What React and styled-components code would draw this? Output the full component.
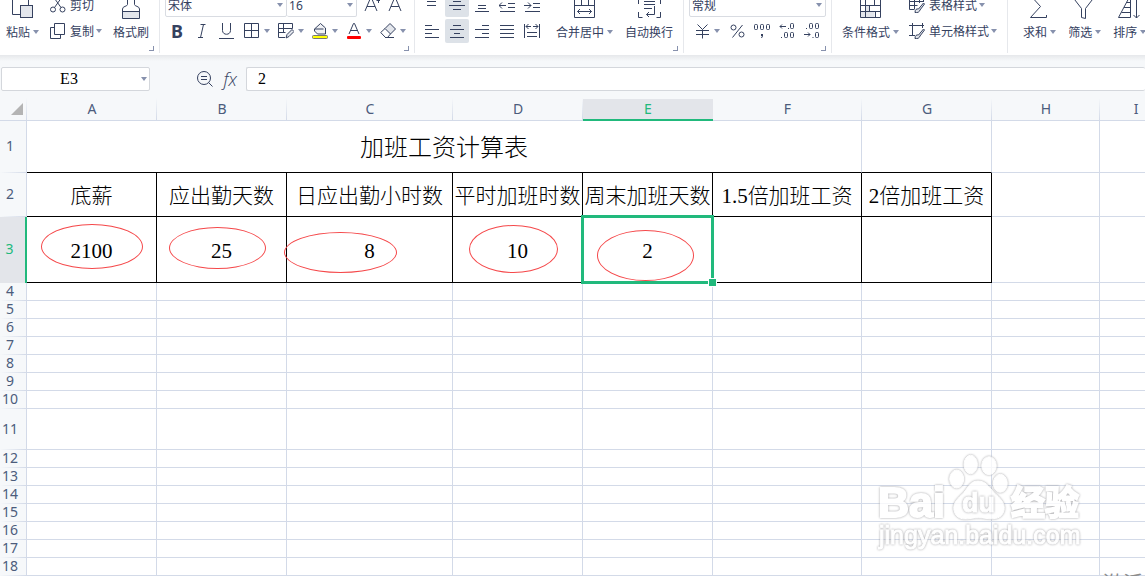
import styled, { createGlobalStyle, css } from 'styled-components';

const INK = '#35415f';
const GRID = '#d3dae8';
const GREEN = '#21b97c';

const GlobalStyle = createGlobalStyle`
  * {
    box-sizing: border-box;
  }
  body {
    margin: 0;
    font-family: 'Noto Sans', 'Noto Sans CJK SC', sans-serif;
    color: ${INK};
  }
  button, input, select {
    font: inherit;
    color: inherit;
  }
`;
const Page = styled.div`
  height: 100vh;
  display: flex;
  flex-direction: column;
  overflow: hidden;
  background: #f6f8fa;
`;

/* ribbon */
const Ribbon = styled.header`
  flex: none;
  height: 55px;
  display: flex;
  align-items: flex-end;
  overflow: hidden;
  background: white;
  font-size: 12px;
`;
const Group = styled.section`
  flex: none;
  margin-bottom: 2px;
  border-right: 1px solid ${(p) => (p.$last ? 'transparent' : '#e6e8ec')};
`;
const GroupBody = styled.div`
  display: flex;
  height: 50px;
  padding: 0 ${(p) => p.$right}px 0 ${(p) => p.$left}px;
  gap: ${(p) => p.$gap || 0}px;
`;
const GroupFooter = styled.div`
  height: 10px;
  padding: 3px 5px 0 0;
  display: flex;
  justify-content: flex-end;
`;
const Launcher = styled.button`
  width: 5px;
  height: 5px;
  padding: 0;
  border: solid #8791ad;
  border-width: 0 1px 1px 0;
  background: none;
`;
const Rows = styled.div`
  display: flex;
  flex-direction: column;
  gap: 2px;
`;
const Row = styled.div`
  display: flex;
  align-items: center;
  height: 24px;
  gap: ${(p) => p.$gap || 0}px;
`;
const Spacer = styled.span`
  width: ${(p) => p.$w}px;
`;
const buttonReset = css`
  border: none;
  padding: 0;
  background: none;
  white-space: nowrap;
  display: flex;
  align-items: center;
`;
const BigButton = styled.button`
  ${buttonReset}
  flex-direction: column;
  height: 50px;
`;
const BigLabel = styled.span`
  display: flex;
  align-items: center;
  gap: 3px;
  height: 22px;
`;
const SmallButton = styled.button`
  ${buttonReset}
  height: 24px;
  gap: 2px;
  svg:first-child {
    margin-right: 2px;
  }
`;
const IconButton = styled.button`
  ${buttonReset}
  justify-content: center;
  width: 24px;
  height: 24px;
  border-radius: 2px;
  background: ${(p) => (p.$active ? '#dde2e8' : 'none')};
`;
const DropButton = styled.button`
  ${buttonReset}
  gap: 4px;
  width: ${(p) => p.$w || 34}px;
  height: 24px;
`;
const Letter = styled.span`
  font: ${(p) => (p.$bold ? 700 : 400)} 18px/24px 'Noto Sans', sans-serif;
`;
const Svg = styled.svg`
  flex: none;
  display: block;
  fill: none;
  stroke: ${INK};
  stroke-width: 1;
  text {
    fill: ${INK};
    stroke: none;
    font-family: 'Open Sans', sans-serif;
    font-weight: 300;
  }
`;
const SelectBox = styled.label`
  display: flex;
  align-items: center;
  width: ${(p) => p.$w}px;
  height: 24px;
  padding-right: 3px;
  border: 1px solid #d9dce2;
  border-left-width: ${(p) => (p.$joined ? 0 : 1)}px;
  border-radius: 2px;
  select {
    flex: 1;
    min-width: 0;
    padding: 0 0 0 2px;
    border: none;
    background: none;
    appearance: none;
    outline: none;
  }
`;

/* formula bar */
const FormulaBar = styled.div`
  flex: none;
  display: flex;
  align-items: center;
  height: 43px;
  padding: 12px 0 7px 1px;
  background: linear-gradient(#e6e8eb, #f6f8fa 6px);
`;
const Field = styled.div`
  display: flex;
  align-items: center;
  height: 24px;
  border: 1px solid #d4d7dc;
  border-radius: 2px;
  background: white;
  input {
    flex: 1;
    min-width: 0;
    padding: 0;
    border: none;
    outline: none;
    background: none;
    color: black;
    font: 16px 'Liberation Serif', 'Noto Sans CJK SC', serif;
  }
`;
const NameField = styled(Field)`
  width: 149px;
  padding-right: 2px;
  input {
    text-align: center;
  }
  button {
    ${buttonReset}
    justify-content: flex-end;
    width: 11px;
    height: 22px;
  }
`;
const FormulaField = styled(Field)`
  flex: 1;
  padding-left: 11px;
  border-right: none;
`;
const FormulaTools = styled.div`
  width: 96px;
  display: flex;
  align-items: center;
  justify-content: flex-end;
  gap: 9px;
  padding-right: 9px;
  button {
    ${buttonReset}
  }
`;
const Fx = styled.span`
  font: italic 300 18px/24px 'Open Sans', sans-serif;
`;

/* sheet */
const Workspace = styled.main`
  position: relative;
  flex: 1;
  overflow: hidden;
`;
const Sheet = styled.table`
  table-layout: fixed;
  width: 1172px;
  border-collapse: separate;
  border-spacing: 0;
  background: white;
  th,
  td {
    padding: 0;
  }
`;
const HeadRow = styled.tr`
  height: 23px;
`;
const ColHead = styled.th`
  font-size: 14px;
  line-height: 20px;
  font-weight: 400;
  color: ${(p) => (p.$active ? GREEN : '#4c5c7c')};
  background: ${(p) =>
    p.$active
      ? 'linear-gradient(#f6f8fa 1px, #e3e5ea 1px)'
      : `linear-gradient(#f6f8fa, ${GRID}) right / 1px 100% no-repeat #f6f8fa`};
  border-bottom: ${(p) =>
    p.$active ? `2px solid ${GREEN}` : `1px solid ${GRID}`};
`;
const Corner = styled(ColHead)`
  svg {
    display: block;
    margin: 0 4px 0 auto;
  }
`;
const SheetRow = styled.tr`
  height: ${(p) => p.$h}px;
`;
const RowHead = styled.th`
  && {
    padding: 0 6px 2px 0;
  }
  font-size: 14px;
  line-height: 16px;
  font-weight: 400;
  color: ${(p) => (p.$active ? GREEN : '#4c5c7c')};
  background: ${(p) =>
    p.$active
      ? '#e3e5ea'
      : `linear-gradient(90deg, #f6f8fa, ${GRID}) bottom / 100% 1px no-repeat #f6f8fa`};
  border-right: ${(p) =>
    p.$active ? `2px solid ${GREEN}` : `1px solid ${GRID}`};
`;
const Cell = styled.td`
  && {
    padding-top: ${(p) => (p.$boxed || p.$title ? 2 : 0)}px;
  }
  position: relative;
  border-right: 1px solid ${(p) => (p.$boxed ? 'black' : GRID)};
  border-bottom: 1px solid ${(p) => (p.$boxed || p.$ruled ? 'black' : GRID)};
  color: black;
  font-family: 'Liberation Serif', 'Noto Sans CJK SC', serif;
  font-size: ${(p) => (p.$title ? 24 : 21)}px;
  font-weight: 300;
  line-height: 30px;
  text-align: center;
  white-space: nowrap;
`;
const Selection = styled.span`
  position: absolute;
  inset: -2px;
  z-index: 1;
  border: 3px solid ${GREEN};
  &::after {
    content: '';
    position: absolute;
    right: -6px;
    bottom: -6px;
    width: 7px;
    height: 7px;
    border: 1px solid white;
    background: ${GREEN};
  }
`;
const Ring = styled.span`
  position: absolute;
  z-index: 1;
  left: ${(p) => p.$box[0]}px;
  top: ${(p) => p.$box[1]}px;
  width: ${(p) => p.$box[2]}px;
  height: ${(p) => p.$box[3]}px;
  border: 1px solid #f5484a;
  border-radius: 50%;
`;
const Watermark = styled.svg`
  position: absolute;
  right: 59px;
  bottom: 22px;
  opacity: 0.8;
  fill: white;
  stroke: white;
  stroke-width: 1;
  font-family: 'Liberation Sans', 'Noto Sans CJK SC', sans-serif;
  > * {
    filter: drop-shadow(0 0 1px #8c8c90);
  }
`;
const Notice = styled.span`
  position: absolute;
  right: 2px;
  bottom: -22px;
  color: #8c8c8c;
  font-size: 20px;
  line-height: 28px;
`;

const Icon = ({ w = 16, h = 16, children }) => (
  <Svg width={w} height={h} viewBox={`0 0 ${w} ${h}`} aria-hidden="true">
    {children}
  </Svg>
);
const Caret = () => (
  <Icon w={6} h={4}>
    <path d="M0 0h6L3 4z" fill="#8791ad" stroke="none" />
  </Icon>
);

const PasteIcon = () => (
  <Icon w={23} h={28}>
    <path d="M9 21.5H1.5V2.5H17.5V12" />
    <rect x="9.5" y="12.5" width="12" height="12" fill="#e3e6ec" />
  </Icon>
);
const BrushIcon = () => (
  <Icon w={24} h={28}>
    <path d="M3.5 18.5h17v7h-17z" fill="#e3e6ec" />
    <path d="M8.5 0v11.5c0 2-5 1.5-5 4.5v3M15.5 0v11.5c0 2 5 1.5 5 4.5v3" />
  </Icon>
);
const CutIcon = () => (
  <Icon>
    <circle cx="3" cy="12.5" r="2.5" />
    <circle cx="12.5" cy="12.5" r="2.5" />
    <path d="M4.5 10.5L12 0M11 10.5L3.5 0" />
  </Icon>
);
const CopyIcon = () => (
  <Icon>
    <path d="M4.5.5h10v11h-10zM4.5 4.5h-4v11h10v-4" />
  </Icon>
);
const BordersIcon = () => (
  <Icon>
    <path d="M.5.5h14v14H.5zM7.5.5v14M.5 7.5h14" />
  </Icon>
);
const DrawBorderIcon = () => (
  <Icon>
    <path d="M7 14.5H.5V.5h14v5M5.5.5v9M.5 5.5h14M.5 9.5h7" />
    <path d="M8 15l1-3.500 5-5 2 2-5 5z" fill="#e3e6ec" />
  </Icon>
);
const FillIcon = () => (
  <Icon>
    <path d="M2.500 6L8.500.500l5 4.500v6h-8l-3-3z" fill="#f1f2f5" />
    <path d="M2.500 6h9M13.500 5v6" />
    <rect x=".5" y="12.500" width="15" height="3" rx="1" fill="#ff0" stroke="#777" />
  </Icon>
);
const FontColorIcon = () => (
  <Icon>
    <path d="M3 11L7.500.500 8.500.500 13 11M5 7.500h6" />
    <rect x="1" y="13" width="14" height="3" rx="1" fill="red" stroke="none" />
  </Icon>
);
const EraserIcon = () => (
  <Icon>
    <path d="M5 5.500l5-5 5.500 5.500-5 5z" fill="#e3e6ec" />
    <path d="M5 5.500L.7 9.500l4.800 5h2l3-3.500M5 14.500h9" />
  </Icon>
);
const lineIcon = (d) => () => (
  <Icon>
    <path d={d} />
  </Icon>
);
const ItalicIcon = lineIcon('M6.500 1.500h5M4 14.500h5M9.500 1.500l-3 13');
const UnderlineIcon = lineIcon('M3.500 0v7.500c0 5 8 5 8 0V0M0 15.500h15');
const TopIcon = lineIcon('M1 .5h14M3 4.500h9M3 8.500h9');
const MiddleIcon = lineIcon('M4 4.500h8M0 8.500h16M4 12.500h8');
const BottomIcon = lineIcon('M4 8.500h8M4 11.500h8M1 14.500h14');
const OutdentIcon = lineIcon('M7 8.500H0M3 5.500l-3 3 3 3M9 6.500h7M9 10.500h7M1 14.500h15');
const IndentIcon = lineIcon('M0 8.500h7M4 5.500l3 3-3 3M9 6.500h7M9 10.500h7M1 14.500h15');
const LeftIcon = lineIcon('M1 2.500h7M1 6.500h14M1 10.500h7M1 14.500h14');
const CenterIcon = lineIcon('M4 2.500h8M1 6.500h14M5 10.500h6M1 14.500h14');
const RightIcon = lineIcon('M8 2.500h7M1 6.500h14M8 10.500h7M1 14.500h14');
const JustifyIcon = lineIcon('M1 2.500h14M1 6.500h14M1 10.500h14M1 14.500h14');
const SpreadIcon = lineIcon(
  'M.5 1v14M15.500 1v14M3 9.500h10M3 13.500h10M2 3.500h5M9 3.500h5M4.500 1L2 3.500 4.500 6M11.500 1L14 3.500 11.500 6'
);
const MergeIcon = () => (
  <Icon w={23} h={28}>
    <path d="M1.500 2v22.500h20V2M1.500 12.500h20M8.500 2v10M15.500 2v10M4.500 18.500h14M7 16l-2.500 2.500L7 21M16 16l2.500 2.500L16 21" />
  </Icon>
);
const WrapIcon = () => (
  <Icon w={23} h={28}>
    <path d="M.5 7v4M22.500 7v4M.5 19v5.500h4M22.500 19v5.500h-4M6 8.500h11M6 11.500h11M6 15.500h8M16.500 13v8.500h-8M11 19l-2.500 2.500L11 24" />
  </Icon>
);
const YenIcon = lineIcon('M3.500 1.500L8.500 6.500l5-5M2 7.500h13M2 11.500h13M8.500 6.500v9');
const PercentIcon = () => (
  <Icon>
    <circle cx="4.500" cy="4.500" r="2.500" />
    <circle cx="12.500" cy="11.500" r="2.500" />
    <path d="M13.500 2l-10 12.500" />
  </Icon>
);
const ThousandsIcon = () => (
  <Icon w={18} h={18}>
    <rect x="1.500" y="2.500" width="3" height="5" rx="1" />
    <rect x="7.500" y="2.500" width="3" height="5" rx="1" />
    <rect x="13.500" y="2.500" width="3" height="5" rx="1" />
    <path d="M9.500 12v2l-1 2M8.500 12v2" />
  </Icon>
);
const MoreDecimalsIcon = () => (
  <Icon w={18} h={18}>
    <rect x="12.500" y="1.500" width="3" height="5" rx="1" />
    <rect x="6.500" y="10.500" width="3" height="5" rx="1" />
    <rect x="12.500" y="10.500" width="3" height="5" rx="1" />
    <path d="M10 6.500h1M3 15.500h1M8 4.500H2M4 2.500l-2 2 2 2" />
  </Icon>
);
const LessDecimalsIcon = () => (
  <Icon w={18} h={18}>
    <rect x="6.500" y="1.500" width="3" height="5" rx="1" />
    <rect x="12.500" y="1.500" width="3" height="5" rx="1" />
    <rect x="12.500" y="10.500" width="3" height="5" rx="1" />
    <path d="M3 6.500h1M9.500 15.500h1M1 12.500h6M5 10.500l2 2-2 2" />
  </Icon>
);
const ConditionIcon = () => (
  <Icon w={23} h={28}>
    <path d="M6.500 12.500h4v6h-4zM1.500 18.500h14v6h-14z" fill="#e3e6ec" stroke="none" />
    <path d="M1.500 2v22.500h20V2M1.500 12.500h20M1.500 18.500h20M6.500 2v22M15.500 2v10M10.500 12.500v6M16.500 18.500v6" />
  </Icon>
);
const TableStyleIcon = () => (
  <Icon>
    <path d="M14.500 5V0H.5v12.500h5M.5 4.500h14M.5 8.500h8M5.500 0v12M10.500 0v6" />
    <path d="M6 15.500c0-3 1.500-4 3.500-3.500l5-6 1 1-4.500 6c-.5 2-2.500 3-5 2.500z" fill="#e3e6ec" />
  </Icon>
);
const CellStyleIcon = () => (
  <Icon>
    <path d="M0 2.500h15M3.500 0v12.500M13.500 0v5M0 12.500h6" />
    <path d="M6 15.500c0-3 1.500-4 3.500-3.500l5-6 1 1-4.500 6c-.5 2-2.500 3-5 2.500z" fill="#e3e6ec" />
  </Icon>
);
const SumIcon = () => (
  <Icon w={23} h={28}>
    <path d="M18.500 4V2.500h-16l10 11-10 11h16V22" />
  </Icon>
);
const FilterIcon = () => (
  <Icon w={23} h={28}>
    <path d="M0 4.500h21l-8.500 11v10l-4-1v-9z" />
  </Icon>
);
const SortIcon = () => (
  <Icon w={25} h={28}>
    <path d="M13.500 24.500V2L1.500 24.500zM9.500 9.500h4M7 14.500h6.500M4.500 19.500h9M19.500 2v23M16.500 22l3 3 3-3" />
  </Icon>
);
const ZoomIcon = () => (
  <Icon w={18} h={18}>
    <circle cx="7" cy="8" r="6.500" />
    <path d="M4 6.500h6M4 9.500h6M11.500 12.500l4 4" />
  </Icon>
);

const Big = ({ icon, label, drop }) => (
  <BigButton>
    {icon}
    <BigLabel>
      {label}
      {drop && <Caret />}
    </BigLabel>
  </BigButton>
);
const Small = ({ icon, label, drop }) => (
  <SmallButton>
    {icon}
    {label}
    {drop && <Caret />}
  </SmallButton>
);
const Drop = ({ icon, label, w }) => (
  <DropButton aria-label={label} $w={w}>
    {icon}
    <Caret />
  </DropButton>
);
const Select = ({ label, value, w, joined }) => (
  <SelectBox $w={w} $joined={joined}>
    <select aria-label={label} defaultValue={value}>
      <option>{value}</option>
    </select>
    <Caret />
  </SelectBox>
);
const Footer = ({ label }) => (
  <GroupFooter>{label && <Launcher aria-label={label} />}</GroupFooter>
);

const columns = [
  ['A', 130],
  ['B', 130],
  ['C', 166],
  ['D', 130],
  ['E', 130],
  ['F', 149],
  ['G', 130],
  ['H', 108],
  ['I', 72],
];
const titles = [
  '底薪',
  '应出勤天数',
  '日应出勤小时数',
  '平时加班时数',
  '周末加班天数',
  '1.5倍加班工资',
  '2倍加班工资',
];
// ring: left, top, width, height inside the cell
const values = [
  { text: '2100', ring: [14, 7, 102, 45] },
  { text: '25', ring: [12, 10, 97, 42] },
  { text: '8', ring: [-3, 15, 113, 41] },
  { text: '10', ring: [16, 8, 89, 48] },
  { text: '2', ring: [14, 13, 97, 51], selected: true },
  { text: '' },
  { text: '' },
];
const emptyRows = [4, 5, 6, 7, 8, 9, 10, 11, 12, 13, 14, 15, 16, 17, 18];

const Toolbar = () => (
  <Ribbon>
    <Group>
      <GroupBody $left={6} $right={10} $gap={11}>
        <Big icon={<PasteIcon />} label="粘贴" drop />
        <Rows>
          <Small icon={<CutIcon />} label="剪切" />
          <Small icon={<CopyIcon />} label="复制" drop />
        </Rows>
        <Big icon={<BrushIcon />} label="格式刷" />
      </GroupBody>
      <Footer label="剪贴板" />
    </Group>
    <Group>
      <GroupBody $left={5} $right={7}>
        <Rows>
          <Row>
            <Select label="字体" value="宋体" w={122} />
            <Select label="字号" value="16" w={70} joined />
            <Spacer $w={2} />
            <IconButton aria-label="增大字号">
              <Icon w={18} h={18}>
                <path d="M3 15L8.500 2h1L15 15M5 10.500h8M14.500 4.500h4M16.500 2v5" />
              </Icon>
            </IconButton>
            <IconButton aria-label="减小字号">
              <Icon w={18} h={18}>
                <path d="M3 15L8.500 2h1L15 15M5 10.500h8" />
              </Icon>
            </IconButton>
          </Row>
          <Row $gap={1}>
            <IconButton aria-label="加粗">
              <Letter $bold>B</Letter>
            </IconButton>
            <IconButton aria-label="倾斜">
              <ItalicIcon />
            </IconButton>
            <IconButton aria-label="下划线">
              <UnderlineIcon />
            </IconButton>
            <Spacer $w={3} />
            <Row>
              <Drop icon={<BordersIcon />} label="边框" />
              <Drop icon={<DrawBorderIcon />} label="绘图边框" />
              <Drop icon={<FillIcon />} label="填充颜色" />
              <Drop icon={<FontColorIcon />} label="字体颜色" />
              <Drop icon={<EraserIcon />} label="清除" w={26} />
            </Row>
          </Row>
        </Rows>
      </GroupBody>
      <Footer label="字体设置" />
    </Group>
    <Group>
      <GroupBody $left={5} $right={10} $gap={12}>
        <Rows>
          <Row $gap={1}>
            <IconButton aria-label="顶端对齐"><TopIcon /></IconButton>
            <IconButton aria-label="垂直居中" $active><MiddleIcon /></IconButton>
            <IconButton aria-label="底端对齐"><BottomIcon /></IconButton>
            <IconButton aria-label="减少缩进"><OutdentIcon /></IconButton>
            <IconButton aria-label="增加缩进"><IndentIcon /></IconButton>
          </Row>
          <Row $gap={1}>
            <IconButton aria-label="左对齐"><LeftIcon /></IconButton>
            <IconButton aria-label="水平居中" $active><CenterIcon /></IconButton>
            <IconButton aria-label="右对齐"><RightIcon /></IconButton>
            <IconButton aria-label="两端对齐"><JustifyIcon /></IconButton>
            <IconButton aria-label="分散对齐"><SpreadIcon /></IconButton>
          </Row>
        </Rows>
        <Big icon={<MergeIcon />} label="合并居中" drop />
        <Big icon={<WrapIcon />} label="自动换行" />
      </GroupBody>
      <Footer label="对齐设置" />
    </Group>
    <Group>
      <GroupBody $left={5} $right={5}>
        <Rows>
          <Select label="数字格式" value="常规" w={137} />
          <Row $gap={1}>
            <Spacer $w={4} />
            <Drop icon={<YenIcon />} label="货币" w={30} />
            <IconButton aria-label="百分比"><PercentIcon /></IconButton>
            <IconButton aria-label="千位分隔"><ThousandsIcon /></IconButton>
            <IconButton aria-label="增加小数位"><MoreDecimalsIcon /></IconButton>
            <IconButton aria-label="减少小数位"><LessDecimalsIcon /></IconButton>
          </Row>
        </Rows>
      </GroupBody>
      <Footer label="数字设置" />
    </Group>
    <Group>
      <GroupBody $left={10} $right={10} $gap={10}>
        <Big icon={<ConditionIcon />} label="条件格式" drop />
        <Rows>
          <Small icon={<TableStyleIcon />} label="表格样式" drop />
          <Small icon={<CellStyleIcon />} label="单元格样式" drop />
        </Rows>
      </GroupBody>
      <Footer />
    </Group>
    <Group $last>
      <GroupBody $left={15} $right={10} $gap={12}>
        <Big icon={<SumIcon />} label="求和" drop />
        <Big icon={<FilterIcon />} label="筛选" drop />
        <Big icon={<SortIcon />} label="排序" drop />
      </GroupBody>
      <Footer />
    </Group>
  </Ribbon>
);

const App = () => {
  return (
    <Page>
      <GlobalStyle />
      <Toolbar />
      <FormulaBar>
        <NameField>
          <input aria-label="名称框" defaultValue="E3" />
          <button aria-label="选择名称">
            <Caret />
          </button>
        </NameField>
        <FormulaTools>
          <button aria-label="浏览公式结果">
            <ZoomIcon />
          </button>
          <button aria-label="插入函数">
            <Fx>fx</Fx>
          </button>
        </FormulaTools>
        <FormulaField>
          <input aria-label="编辑栏" defaultValue="2" />
        </FormulaField>
      </FormulaBar>
      <Workspace>
        <Sheet>
          <colgroup>
            <col width="27" />
            {columns.map(([name, width]) => (
              <col key={name} width={width} />
            ))}
          </colgroup>
          <thead>
            <HeadRow>
              <Corner aria-label="全选">
                <svg width="12" height="12" viewBox="0 0 12 12">
                  <path d="M12 0v12H0z" fill="#b4b4b4" />
                </svg>
              </Corner>
              {columns.map(([name]) => (
                <ColHead key={name} $active={name === 'E'}>
                  {name}
                </ColHead>
              ))}
            </HeadRow>
          </thead>
          <tbody>
            <SheetRow $h={52}>
              <RowHead>1</RowHead>
              <Cell colSpan={6} $title $ruled>
                加班工资计算表
              </Cell>
              <Cell $ruled />
              <Cell />
              <Cell />
            </SheetRow>
            <SheetRow $h={44}>
              <RowHead>2</RowHead>
              {titles.map((title) => (
                <Cell key={title} $boxed>
                  {title}
                </Cell>
              ))}
              <Cell />
              <Cell />
            </SheetRow>
            <SheetRow $h={66}>
              <RowHead $active>3</RowHead>
              {values.map(({ text, ring, selected }, i) => (
                <Cell key={i} $boxed>
                  {text}
                  {selected && <Selection />}
                  {ring && <Ring $box={ring} />}
                </Cell>
              ))}
              <Cell />
              <Cell />
            </SheetRow>
            {emptyRows.map((n) => (
              <SheetRow key={n} $h={n === 11 ? 41 : 18}>
                <RowHead>{n}</RowHead>
                {columns.map(([name]) => (
                  <Cell key={name} />
                ))}
              </SheetRow>
            ))}
          </tbody>
        </Sheet>
        <Watermark width="210" height="104" viewBox="0 0 210 104">
          <text x="2" y="67" fontSize="43" fontWeight="700" strokeWidth="2">Bai</text>
          <ellipse cx="80.7" cy="29" rx="7" ry="9" />
          <ellipse cx="94.7" cy="14.5" rx="6.700" ry="9.300" />
          <ellipse cx="113" cy="15.700" rx="7.300" ry="9" />
          <ellipse cx="124.300" cy="33.300" rx="7" ry="9" />
          <path d="M102 31c-9 0-10 8-16 13.500-7 6-9 11-8 16 2 9 10 9 16 8 6-1 11-1 17 0 8 1 15 0 17-8 1-5-1-10-8-16-6-5.500-9-13.500-18-13.500z" />
          <text x="86" y="62" fontSize="27" fontWeight="700">du</text>
          <text x="135" y="65" fontSize="34" fontWeight="700" strokeWidth="2">经验</text>
          <text x="3" y="94" fontSize="25">jingyan.baidu.com</text>
        </Watermark>
        <Notice>激活</Notice>
      </Workspace>
    </Page>
  );
};

export default App;
